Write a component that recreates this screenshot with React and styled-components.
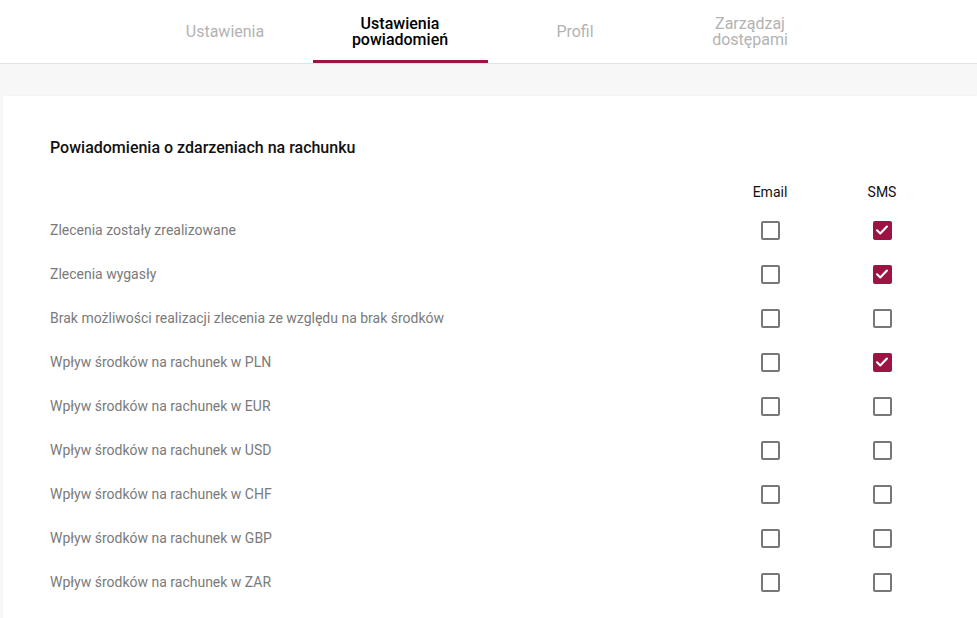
import { useState } from 'react';
import styled, { createGlobalStyle } from 'styled-components';

const GlobalStyle = createGlobalStyle`
  html, body {
    margin: 0;
    padding: 0;
    background: #f7f7f7;
    font-family: Roboto, "Liberation Sans", Arial, sans-serif;
  }
  * { box-sizing: border-box; }
`

const accent = '#9b1443';

const StyledHeader = styled.div`
  background: #fff;
  height: 64px;
  border-bottom: 1px solid #e3e3e3;
  display: flex;
  justify-content: center;
  padding-right: 2px;
`

const StyledTab = styled.div`
  width: 175px;
  height: 63px;
  display: flex;
  align-items: center;
  justify-content: center;
  text-align: center;
  font-size: 16px;
  line-height: 16px;
  font-weight: ${(p) => (p.active ? 500 : 400)};
  color: ${(p) => (p.active ? '#000' : '#b3b3b3')};
  border-bottom: 3px solid ${(p) => (p.active ? accent : 'transparent')};
  padding-top: 3px;
  cursor: pointer;
`

const StyledTabText = styled.span`
  max-width: ${(p) => (p.wrap ? '100px' : 'none')};
`

const StyledMain = styled.div`
  padding: 32px 0 0 3px;
`

const StyledCard = styled.div`
  background: #fff;
  padding: 43px 0 18px 47px;
  box-shadow: 0 0 2px rgba(0, 0, 0, 0.04);
`

const StyledTitle = styled.h2`
  margin: 0 0 24px 0;
  font-size: 16px;
  line-height: 18px;
  font-weight: 500;
  color: #111;
`

const StyledGrid = styled.div`
  display: grid;
  grid-template-columns: 1fr 112px 112px 39px;
  align-items: center;
`

const StyledColHead = styled.div`
  font-size: 14px;
  color: #111;
  text-align: center;
  height: 22px;
  line-height: 22px;
  margin-bottom: 5px;
`

const StyledLabel = styled.div`
  font-size: 14px;
  color: #7a7a7a;
  height: 44px;
  display: flex;
  align-items: center;
`

const StyledCell = styled.div`
  height: 44px;
  display: flex;
  align-items: center;
  justify-content: center;
`

const StyledBox = styled.button`
  width: 19px;
  height: 19px;
  padding: 0;
  border-radius: 2px;
  border: 2px solid ${(p) => (p.checked ? accent : '#777')};
  background: ${(p) => (p.checked ? accent : '#fff')};
  display: flex;
  align-items: center;
  justify-content: center;
  cursor: pointer;
`

const rowsData = [
  ['Zlecenia zostały zrealizowane', false, true],
  ['Zlecenia wygasły', false, true],
  ['Brak możliwości realizacji zlecenia ze względu na brak środków', false, false],
  ['Wpływ środków na rachunek w PLN', false, true],
  ['Wpływ środków na rachunek w EUR', false, false],
  ['Wpływ środków na rachunek w USD', false, false],
  ['Wpływ środków na rachunek w CHF', false, false],
  ['Wpływ środków na rachunek w GBP', false, false],
  ['Wpływ środków na rachunek w ZAR', false, false],
];

function Checkbox({ checked, onToggle }) {
  return (
    <StyledBox checked={checked} onClick={onToggle}>
      {checked && (
        <svg width="14" height="14" viewBox="0 0 24 24" fill="none">
          <path d="M3.5 12.5l5.5 5.5L20.5 6" stroke="#fff" strokeWidth="3.6" strokeLinecap="round" strokeLinejoin="round" />
        </svg>
      )}
    </StyledBox>
  );
}

function App() {
  const [rows, setRows] = useState(rowsData);
  const tabs = ['Ustawienia', 'Ustawienia powiadomień', 'Profil', 'Zarządzaj dostępami'];

  const toggle = (i, col) => {
    setRows(rows.map((r, idx) => {
      if (idx !== i) return r;
      const copy = [...r];
      copy[col] = !copy[col];
      return copy;
    }));
  };

  return (
    <>
      <GlobalStyle />
      <StyledHeader>
        {tabs.map((t, i) => (
          <StyledTab key={t} active={i === 1}>
            <StyledTabText wrap={i % 2 === 1}>{t}</StyledTabText>
          </StyledTab>
        ))}
      </StyledHeader>
      <StyledMain>
        <StyledCard>
          <StyledTitle>Powiadomienia o zdarzeniach na rachunku</StyledTitle>
          <StyledGrid>
            <div />
            <StyledColHead>Email</StyledColHead>
            <StyledColHead>SMS</StyledColHead>
            <div />
            {rows.map((r, i) => (
              <>
                <StyledLabel key={`l${i}`}>{r[0]}</StyledLabel>
                <StyledCell key={`e${i}`}><Checkbox checked={r[1]} onToggle={() => toggle(i, 1)} /></StyledCell>
                <StyledCell key={`s${i}`}><Checkbox checked={r[2]} onToggle={() => toggle(i, 2)} /></StyledCell>
                <div key={`x${i}`} />
              </>
            ))}
          </StyledGrid>
        </StyledCard>
      </StyledMain>
    </>
  );
}

export default App;
